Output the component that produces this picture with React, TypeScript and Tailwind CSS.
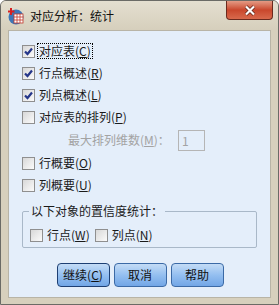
import React from 'react';

const font = { fontFamily: '"Noto Sans CJK SC", "Liberation Sans", sans-serif' };

const Box = ({ checked = false }: { checked?: boolean }) => (
  <span className="w-[13px] h-[13px] border border-[#8f8f8f] bg-gradient-to-br from-[#d8d8d8] to-[#fbfbfb] flex items-center justify-center shrink-0">
    {checked && (
      <svg width="9" height="9" viewBox="0 0 9 9">
        <path d="M1 4.5 L3.5 7 L8 1.5" fill="none" stroke="#26378a" strokeWidth="2.2" />
      </svg>
    )}
  </span>
);

const Check = ({ label, keyChar, checked, focused }: { label: string; keyChar: string; checked?: boolean; focused?: boolean }) => (
  <div className="flex items-center gap-[3px] h-[22px]">
    <Box checked={checked} />
    <span className={`text-[12px] text-[#1a1a1a] leading-[14px] px-[1px] ${focused ? 'outline outline-1 outline-dotted outline-black' : ''}`}>
      {label}(<span className="underline">{keyChar}</span>)
    </span>
  </div>
);

const Btn = ({ children, focused }: { children: React.ReactNode; focused?: boolean }) => (
  <button
    className={`w-[53px] h-[24px] rounded-[4px] border ${focused ? 'border-[#1d3f73]' : 'border-[#3b6aa6]'} bg-gradient-to-b from-[#c4dcf6] via-[#94bff0] to-[#72a6e6] text-[12px] text-[#111] flex items-center justify-center`}
  >
    {children}
  </button>
);

export default function App() {
  return (
    <div style={font} className="w-[279px] h-[305px] bg-[#d7d0bd] border border-[#6b6b66] rounded-t-[6px] flex flex-col overflow-hidden">
      {/* title bar */}
      <div className="h-[29px] flex items-center px-[6px] relative bg-gradient-to-b from-[#e4dfd0] to-[#d6cfbc]">
        <svg width="18" height="18" viewBox="0 0 18 18" className="mr-[5px]">
          <circle cx="9" cy="10" r="7.5" fill="#3d76b8" />
          <rect x="7" y="7" width="9" height="9" fill="#fff" stroke="#c0392b" strokeWidth="0.8" />
          <path d="M7 10 H16 M7 13 H16 M10 7 V16 M13 7 V16" stroke="#c0392b" strokeWidth="0.8" />
          <path d="M4 1 V8 M1 4.5 H7.5" stroke="#d62020" strokeWidth="2" />
        </svg>
        <span className="text-[12px] text-[#111]">对应分析：统计</span>
        <div className="absolute right-[5px] top-0 w-[47px] h-[19px] rounded-b-[4px] border border-[#6a2a1e] border-t-0 bg-gradient-to-b from-[#e39a84] via-[#c9472c] to-[#d8694c] flex items-center justify-center">
          <svg width="12" height="11" viewBox="0 0 12 11">
            <path d="M2 1.5 L10 9.5 M10 1.5 L2 9.5" stroke="#5a2015" strokeWidth="3.6" />
            <path d="M2 1.5 L10 9.5 M10 1.5 L2 9.5" stroke="#fff" strokeWidth="2.2" />
          </svg>
        </div>
      </div>

      {/* client area */}
      <div className="mx-[7px] mb-[6px] flex-1 border border-[#b8b4a6] bg-[#e4eefa] flex flex-col pt-[9px] pl-[13px] pr-[12px]">
        <Check label="对应表" keyChar="C" checked focused />
        <Check label="行点概述" keyChar="R" checked />
        <Check label="列点概述" keyChar="L" checked />
        <Check label="对应表的排列" keyChar="P" />
        <div className="flex items-center h-[24px] pl-[46px] text-[12px] text-[#a3a3a3]">
          <span className="w-[110px]">
            最大排列维数(<span className="underline">M</span>)：
          </span>
          <span className="w-[27px] h-[21px] border border-[#b5b5b5] bg-[#e4eefa] pl-[3px] leading-[20px]">1</span>
        </div>
        <Check label="行概要" keyChar="O" />
        <Check label="列概要" keyChar="U" />

        <div className="mt-[15px] mr-[1px] border border-[#a9b8c8] rounded-[2px] relative h-[37px] flex items-end pl-[7px] pb-[1px]">
          <span className="absolute -top-[9px] left-[6px] px-[2px] bg-[#e4eefa] text-[12px] text-[#1a1a1a] leading-[16px]">
            以下对象的置信度统计：
          </span>
          <div className="flex gap-[4px]">
            <Check label="行点" keyChar="W" />
            <Check label="列点" keyChar="N" />
          </div>
        </div>

        <div className="flex justify-center gap-[4px] mt-[15px]">
          <Btn focused>
            继续(<span className="underline">C</span>)
          </Btn>
          <Btn>取消</Btn>
          <Btn>帮助</Btn>
        </div>
      </div>
    </div>
  );
}
